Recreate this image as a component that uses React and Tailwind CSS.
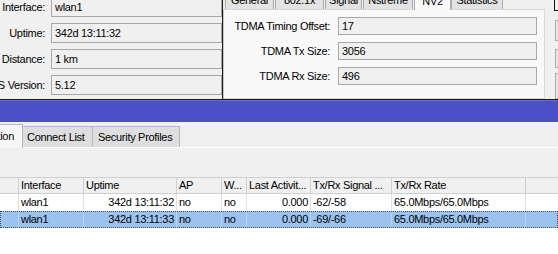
import React from "react";

const font = { fontFamily: '"Liberation Sans", Arial, sans-serif' };

const leftRows = [
  ["Interface:", "wlan1"],
  ["Uptime:", "342d 13:11:32"],
  ["Distance:", "1 km"],
  ["OS Version:", "5.12"],
];

const nv2Rows = [
  ["TDMA Timing Offset:", "17"],
  ["TDMA Tx Size:", "3056"],
  ["TDMA Rx Size:", "496"],
];

const dialogTabs = [
  ["General", "w-[49px]"],
  ["802.1x", "w-[49px]"],
  ["Signal", "w-[37px]"],
  ["Nstreme", "w-[50px]"],
  ["NV2", "w-[37px]", true],
  ["Statistics", "w-[52px]"],
];

const cols = [
  { w: "w-[19px]", h: "" },
  { w: "w-[65px]", h: "Interface" },
  { w: "w-[93px]", h: "Uptime", right: true },
  { w: "w-[45px]", h: "AP" },
  { w: "w-[25px]", h: "W..." },
  { w: "w-[64px]", h: "Last Activit...", right: true },
  { w: "w-[81px]", h: "Tx/Rx Signal ..." },
  { w: "w-[134px]", h: "Tx/Rx Rate" },
];

const rows = [
  ["", "wlan1", "342d 13:11:32", "no", "no", "0.000", "-62/-58", "65.0Mbps/65.0Mbps"],
  ["", "wlan1", "342d 13:11:33", "no", "no", "0.000", "-69/-66", "65.0Mbps/65.0Mbps"],
];

function Field({ children, className }) {
  return (
    <div className={`flex items-center border border-[#a8a8a8] px-[3px] ${className}`}>
      {children}
    </div>
  );
}

export default function App() {
  return (
    <div
      style={font}
      className="w-[558px] h-[254px] overflow-hidden bg-[#f0f0f0] text-[11px] tracking-[-0.3px] text-black leading-none"
    >
      {/* upper windows */}
      <div className="flex h-[99px] overflow-hidden">
        <div className="w-[223px] shrink-0 border-r border-[#1a1a1a] overflow-hidden">
          <div className="flex flex-col gap-[6px] mt-[-3px]">
            {leftRows.map(([label, value]) => (
              <div key={label} className="flex items-center h-[20px]">
                <div className="w-[45px] shrink-0 flex justify-end">
                  <span className="shrink-0 whitespace-nowrap">{label}</span>
                </div>
                <Field className="ml-[6px] flex-1 h-[20px]">{value}</Field>
              </div>
            ))}
          </div>
        </div>

        <div className="flex flex-1">
          <div className="w-[322px] shrink-0 flex flex-col">
            <div className="flex items-end h-[18px] mt-[-9px] pl-[2px] relative z-10">
              {dialogTabs.map(([name, w, active]) => (
                <div
                  key={name}
                  className={`${w} shrink-0 flex items-center justify-center border border-[#acacac] border-b-0 whitespace-nowrap ${
                    active ? "h-[20px] bg-[#f9f9f9] mb-[-1px] pt-[1px]" : "h-[18px] bg-[#e3e3e3] mr-[1px]"
                  }`}
                >
                  {name}
                </div>
              ))}
            </div>
            <div className="flex-1 border border-[#d9d9d9] border-l-[#c8c8c8] bg-[#f9f9f9] pt-[7px] pl-[9px]">
              <div className="flex flex-col gap-[7px]">
                {nv2Rows.map(([label, value]) => (
                  <div key={label} className="flex items-center h-[18px]">
                    <div className="w-[97px] shrink-0 text-right whitespace-nowrap">{label}</div>
                    <Field className="ml-[8px] w-[199px] h-[18px] bg-[#f0f0f0]">{value}</Field>
                  </div>
                ))}
              </div>
            </div>
          </div>

          <div className="ml-[9px] flex-1 flex flex-col">
            <div className="h-[13px] border-l border-b border-[#111]" />
            <div className="ml-[1px] mt-[9px] h-[23px] border border-r-0 border-[#adadad] bg-[#e6e6e6]" />
            <div className="ml-[1px] mt-[8px] h-[22px] border border-r-0 border-[#adadad] bg-[#e6e6e6]" />
            <div className="ml-[1px] mt-[5px] h-[30px] border border-r-0 border-[#adadad] bg-[#e6e6e6]" />
          </div>
        </div>
      </div>

      {/* lower window */}
      <div className="h-[1px] bg-[#1a1a1a]" />
      <div className="h-[22px] bg-[#4c50c8] border-t border-[#6a6ed6]" />

      <div className="flex items-end h-[25px] pt-[1px]">
        <div className="w-[23px] h-[24px] shrink-0 flex items-center justify-end border-r border-t border-[#b8b8b8] bg-[#f7f7f7] mb-[-1px] relative z-10">
          <span className="shrink-0 whitespace-nowrap pr-[8px]">Registration</span>
        </div>
        <div className="w-[70px] h-[21px] shrink-0 flex items-center pl-[4px] border-r border-t border-[#b8b8b8] bg-[#dedede]">
          Connect List
        </div>
        <div className="w-[87px] h-[21px] shrink-0 flex items-center pl-[5px] border-r border-t border-[#b8b8b8] bg-[#dedede]">
          Security Profiles
        </div>
      </div>
      <div className="h-[1px] bg-white" />

      <div className="h-[29px]" />

      <div className="bg-white h-[80px]">
        <div className="flex h-[17px] bg-[#f0f0f0] border-t border-b border-[#d0d0d0]">
          {cols.map((c, i) => (
            <div
              key={i}
              className={`${c.w} shrink-0 flex items-center pl-[2px] border-r border-[#d0d0d0] whitespace-nowrap overflow-hidden`}
            >
              {c.h}
            </div>
          ))}
          <div className="flex-1" />
        </div>
        {rows.map((r, ri) => (
          <div
            key={ri}
            className={`flex h-[17px] ${
              ri === 1 ? "bg-[#9cc3ee] outline outline-1 outline-dotted outline-[#4a4a4a] -outline-offset-1" : "bg-white"
            }`}
          >
            {r.map((v, i) => (
              <div
                key={i}
                className={`${cols[i].w} shrink-0 flex items-center border-r whitespace-nowrap overflow-hidden ${
                  ri === 1 ? "border-[#b9d5f2]" : "border-[#e3e3e3]"
                } ${cols[i].right ? "justify-end pr-[2px]" : "pl-[2px]"}`}
              >
                {v}
              </div>
            ))}
            <div className="flex-1" />
          </div>
        ))}
      </div>
    </div>
  );
}
